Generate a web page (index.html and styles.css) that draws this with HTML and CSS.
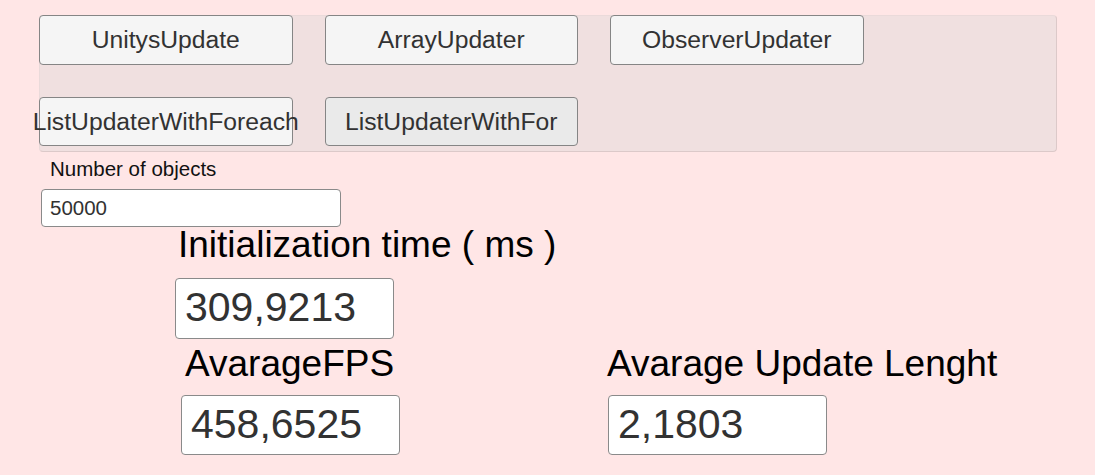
FILE: index.html
```html
<!DOCTYPE html>
<html lang="en">
<head>
<meta charset="utf-8">
<title>Updater Benchmark</title>
<link rel="stylesheet" href="styles.css">
</head>
<body>
<div class="screen">
  <div class="panel">
    <button class="btn">UnitysUpdate</button>
    <button class="btn">ArrayUpdater</button>
    <button class="btn">ObserverUpdater</button>
    <button class="btn">ListUpdaterWithForeach</button>
    <button class="btn btn-hover">ListUpdaterWithFor</button>
  </div>
  <div class="count-label">Number of objects</div>
  <div class="count-input">50000</div>
  <div class="metric metric-init">
    <div class="metric-label">Initialization time ( ms )</div>
    <div class="metric-value">309,9213</div>
  </div>
  <div class="metric-row">
    <div class="metric metric-fps">
      <div class="metric-label">AvarageFPS</div>
      <div class="metric-value">458,6525</div>
    </div>
    <div class="metric metric-len">
      <div class="metric-label">Avarage Update Lenght</div>
      <div class="metric-value">2,1803</div>
    </div>
  </div>
</div>
</body>
</html>
```

FILE: styles.css
```css
html, body {
  margin: 0;
  padding: 0;
  background: #ffe6e6;
}

.screen {
  width: 1095px;
  height: 475px;
  overflow: hidden;
  font-family: "Liberation Sans", Arial, sans-serif;
  color: #000;
  display: flex;
  flex-direction: column;
  align-items: flex-start;
}

.panel {
  box-sizing: border-box;
  margin: 15px 0 0 39px;
  width: 1018px;
  height: 137px;
  background: #f0e0e0;
  border: 1px solid #dcc9c9;
  border-top-color: #eadada;
  border-left-color: #eadada;
  border-radius: 4px;
  display: flex;
  flex-wrap: wrap;
  align-content: flex-start;
  column-gap: 32px;
  row-gap: 33px;
  padding: 0;
}

.btn {
  box-sizing: border-box;
  margin: -1px 0 0 0;
  width: 253.5px;
  height: 50px;
  background: #f5f5f5;
  border: 1px solid #858585;
  border-radius: 4px;
  color: #323232;
  font-family: "Liberation Sans", Arial, sans-serif;
  font-size: 24.7px;
  padding: 0;
  display: flex;
  align-items: center;
  justify-content: center;
  white-space: nowrap;
}

.btn:nth-child(1),
.btn:nth-child(4) {
  margin-left: -1px;
}

.btn:nth-child(n+4) {
  height: 49px;
}

.btn-hover {
  background: #eaeaea;
}

.count-label {
  margin: 5px 0 0 50px;
  font-size: 20.5px;
  line-height: 23px;
  height: 23px;
  color: #111;
}

.count-input {
  box-sizing: border-box;
  margin: 9px 0 0 41px;
  width: 300px;
  height: 38px;
  background: #fff;
  border: 1px solid #8a8a8a;
  border-radius: 4px;
  padding: 0 0 0 8px;
  font-size: 20.5px;
  line-height: 35px;
  color: #323232;
}

.metric {
  display: flex;
  flex-direction: column;
  align-items: flex-start;
}

.metric-label {
  font-size: 37px;
  line-height: 36px;
  height: 36px;
  white-space: nowrap;
  color: #000;
}

.metric-value {
  box-sizing: border-box;
  width: 219px;
  height: 61px;
  margin-top: 15px;
  background: #fff;
  border: 1px solid #8a8a8a;
  border-radius: 4px;
  padding: 0 0 0 9px;
  font-size: 41px;
  line-height: 56px;
  color: #323232;
}

.metric-init {
  margin: 0 0 0 175px;
}

.metric-init .metric-label {
  margin-left: 3px;
}

.metric-row {
  display: flex;
  margin-top: 7px;
}

.metric-row .metric-value {
  margin-top: 13px;
  height: 60px;
}

.metric-fps {
  margin-left: 181px;
}

.metric-fps .metric-label {
  margin-left: 4px;
}

.metric-len {
  margin-left: 208px;
}

.metric-len .metric-label {
  margin-left: -1px;
}
```
